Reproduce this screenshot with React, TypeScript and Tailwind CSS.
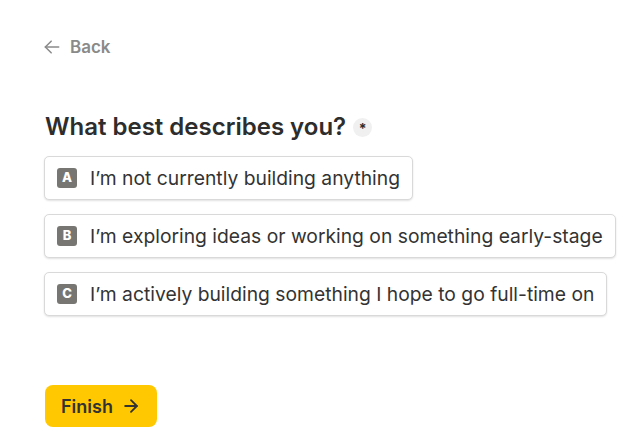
import React from 'react';

const options = [
  { key: 'A', label: 'I’m not currently building anything' },
  { key: 'B', label: 'I’m exploring ideas or working on something early-stage' },
  { key: 'C', label: 'I’m actively building something I hope to go full-time on' },
];

function ArrowLeft() {
  return (
    <svg width="20" height="20" viewBox="0 0 24 24" fill="none" stroke="currentColor" strokeWidth="1.8" strokeLinecap="round" strokeLinejoin="round">
      <path d="M20 12H4" />
      <path d="M11 19l-7-7 7-7" />
    </svg>
  );
}

function ArrowRight() {
  return (
    <svg width="20" height="20" viewBox="0 0 24 24" fill="none" stroke="currentColor" strokeWidth="2.2" strokeLinecap="round" strokeLinejoin="round">
      <path d="M5 12h14" />
      <path d="M12 5l7 7-7 7" />
    </svg>
  );
}

export default function App() {
  return (
    <div className="min-h-[448px] w-full bg-white font-['Inter',sans-serif]">
      <div className="pl-[42px] pt-[37px]">
        <button className="flex h-[20px] items-center gap-[8px] text-[17px] font-semibold leading-[20px] text-[#8a8a8a]">
          <ArrowLeft />
          <span>Back</span>
        </button>

        <div className="mt-[56px] flex h-[28px] items-center gap-[7px] pl-[3px]">
          <h1 className="text-[24px] font-semibold leading-[28px] text-[#2d2d2d]">What best describes you?</h1>
          <span className="flex h-[19px] w-[19px] items-center justify-center rounded-full bg-[#f0f0f0] pt-[4px] text-[14px] font-bold leading-none text-[#2d2d2d]">*</span>
        </div>

        <div className="mt-[15px] flex flex-col items-start gap-[14px] pl-[2px]">
          {options.map((o) => (
            <div
              key={o.key}
              className="flex h-[44px] items-center gap-[13px] rounded-[5px] border border-[#d9d9d9] bg-white pl-[12px] pr-[12px] shadow-[0_1px_2px_rgba(0,0,0,0.12)]"
            >
              <span className="flex h-[20px] w-[20px] items-center justify-center rounded-[3px] bg-[#777672] text-[13px] font-extrabold text-white">
                {o.key}
              </span>
              <span className="text-[19.3px] leading-[24px] text-[#333333]">{o.label}</span>
            </div>
          ))}
        </div>

        <button className="mt-[69px] ml-[3px] flex h-[42px] w-[112px] items-center justify-center gap-[8px] rounded-[8px] bg-[#ffc800] text-[18px] font-semibold text-[#333333]">
          <span>Finish</span>
          <ArrowRight />
        </button>
      </div>
    </div>
  );
}
